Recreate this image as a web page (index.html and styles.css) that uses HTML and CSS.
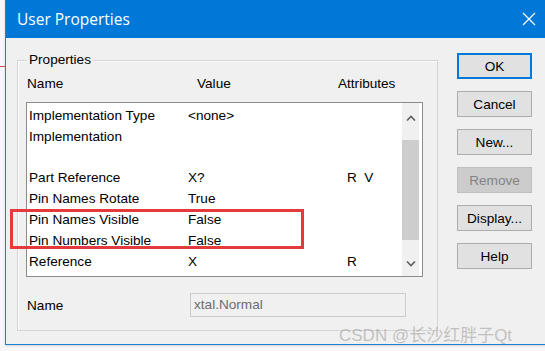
FILE: index.html
```html
<!DOCTYPE html>
<html>
<head>
<meta charset="utf-8">
<link rel="stylesheet" href="styles.css">
</head>
<body>
<div class="behind-line"></div>
<div class="window">
  <div class="titlebar">
    <span class="title">User Properties</span>
    <svg class="close" width="14" height="14" viewBox="0 0 14 14"><path d="M1 1 L13 13 M13 1 L1 13" stroke="#fff" stroke-width="1.2" fill="none"/></svg>
  </div>
  <div class="client">
    <div class="group">
      <span class="group-label">Properties</span>
      <div class="header">
        <span>Name</span><span>Value</span><span>Attributes</span>
      </div>
      <div class="list">
        <div class="rows">
          <div class="row"><span>Implementation Type</span><span>&lt;none&gt;</span><span></span></div>
          <div class="row"><span>Implementation</span><span></span><span></span></div>
          <div class="row"><span></span><span></span><span></span></div>
          <div class="row"><span>Part Reference</span><span>X?</span><span>R&nbsp;&nbsp;V</span></div>
          <div class="row"><span>Pin Names Rotate</span><span>True</span><span></span></div>
          <div class="row"><span>Pin Names Visible</span><span>False</span><span></span></div>
          <div class="row"><span>Pin Numbers Visible</span><span>False</span><span></span></div>
          <div class="row"><span>Reference</span><span>X</span><span>R</span></div>
        </div>
        <div class="scrollbar">
          <div class="sb-btn up"><svg width="10" height="6" viewBox="0 0 10 6"><path d="M1 5.5 L5 1.5 L9 5.5" stroke="#606060" stroke-width="1.6" fill="none"/></svg></div>
          <div class="sb-track"><div class="sb-thumb"></div></div>
          <div class="sb-btn down"><svg width="10" height="6" viewBox="0 0 10 6"><path d="M1 0.5 L5 4.5 L9 0.5" stroke="#606060" stroke-width="1.6" fill="none"/></svg></div>
        </div>
      </div>
      <div class="name-row">
        <span class="name-label">Name</span>
        <div class="name-field">xtal.Normal</div>
      </div>
    </div>
    <div class="buttons">
      <div class="btn default">OK</div>
      <div class="btn">Cancel</div>
      <div class="btn">New...</div>
      <div class="btn disabled">Remove</div>
      <div class="btn">Display...</div>
      <div class="btn">Help</div>
    </div>
  </div>
</div>
<div class="highlight"></div>
<div class="watermark">CSDN @长沙红胖子Qt</div>
</body>
</html>
```
FILE: styles.css
```css
html, body {
  margin: 0;
  padding: 0;
}
body {
  width: 545px;
  height: 351px;
  overflow: hidden;
  background: #f7f7f7;
  position: relative;
  font-family: "Liberation Sans", Arial, sans-serif;
  font-size: 13.6px;
  color: #000;
}
.behind-line {
  position: absolute;
  left: 0;
  top: 66px;
  width: 5px;
  height: 1px;
  background: #e04040;
}
.window {
  margin-left: 5px;
  width: 560px;
  height: 344px;
  border-left: 1px solid #1c7fd4;
  border-bottom: 1px solid #1c7fd4;
  background: #f0f0f0;
  box-shadow: 0 1px 2px rgba(0,0,0,0.15);
}
.titlebar {
  height: 38px;
  background: #0078d7;
  display: flex;
  align-items: center;
  padding-left: 11px;
  width: 540px;
  box-sizing: border-box;
  justify-content: space-between;
  padding-right: 10px;
}
.title {
  font-family: "Open Sans", "Noto Sans", sans-serif;
  font-size: 15.5px;
  color: #fff;
  padding-bottom: 1px;
}
.close {
  margin-right: 0;
}
.client {
  display: flex;
  padding: 15px 0 0 11px;
}
.group {
  position: relative;
  margin-top: 7px;
  width: 397px;
  padding: 15px 14px 13px 8px;
  border: 1px solid #d5d5d5;
  box-shadow: inset 1px 1px 0 #fbfbfb;
}
.group-label {
  position: absolute;
  left: 9px;
  top: -9px;
  padding: 0 2px;
  background: #f0f0f0;
  line-height: 16px;
}
.header {
  display: grid;
  grid-template-columns: 170px 141px auto;
  height: 16px;
  line-height: 16px;
  padding-left: 1px;
}
.list {
  margin-top: 10px;
  height: 175px;
  box-sizing: border-box;
  border: 1px solid #8c8c8c;
  background: #fff;
  display: flex;
}
.rows {
  flex: 1;
  padding: 3px 0 0 2px;
}
.row {
  display: grid;
  grid-template-columns: 159px 159px auto;
  height: 20.8px;
  line-height: 20.8px;
  white-space: nowrap;
}
.scrollbar {
  width: 17px;
  margin-right: 3px;
  background: #f0f0f0;
  display: flex;
  flex-direction: column;
}
.sb-btn {
  display: flex;
  align-items: center;
  justify-content: center;
}
.sb-btn.up {
  height: 30px;
}
.sb-btn.down {
  height: 24px;
}
.sb-track {
  flex: 1;
  padding-top: 7px;
}
.sb-thumb {
  height: 100px;
  background: #cdcdcd;
}
.name-row {
  margin-top: 16px;
  display: flex;
  align-items: center;
  height: 24px;
}
.name-label {
  width: 163px;
  padding-left: 1px;
}
.name-field {
  width: 216px;
  height: 24px;
  box-sizing: border-box;
  border: 1px solid #cccccc;
  background: #f0f0f0;
  color: #6d6d6d;
  padding-left: 3px;
  line-height: 22px;
}
.buttons {
  margin-left: 19px;
  display: flex;
  flex-direction: column;
  gap: 12px;
}
.btn {
  width: 75px;
  height: 26px;
  box-sizing: border-box;
  border: 1px solid #adadad;
  background: #e1e1e1;
  display: flex;
  align-items: center;
  justify-content: center;
}
.btn.default {
  border: 2px solid #0078d7;
}
.btn.disabled {
  background: #cccccc;
  border-color: #bfbfbf;
  color: #838383;
}
.highlight {
  position: absolute;
  left: 10px;
  top: 209px;
  width: 294px;
  height: 40px;
  box-sizing: border-box;
  border: 3px solid #e6393c;
}
.watermark {
  position: absolute;
  left: 339px;
  top: 321px;
  font-family: "Liberation Sans", "Noto Sans CJK SC", sans-serif;
  font-size: 17px;
  color: rgba(160,160,160,0.6);
  white-space: nowrap;
}
```
